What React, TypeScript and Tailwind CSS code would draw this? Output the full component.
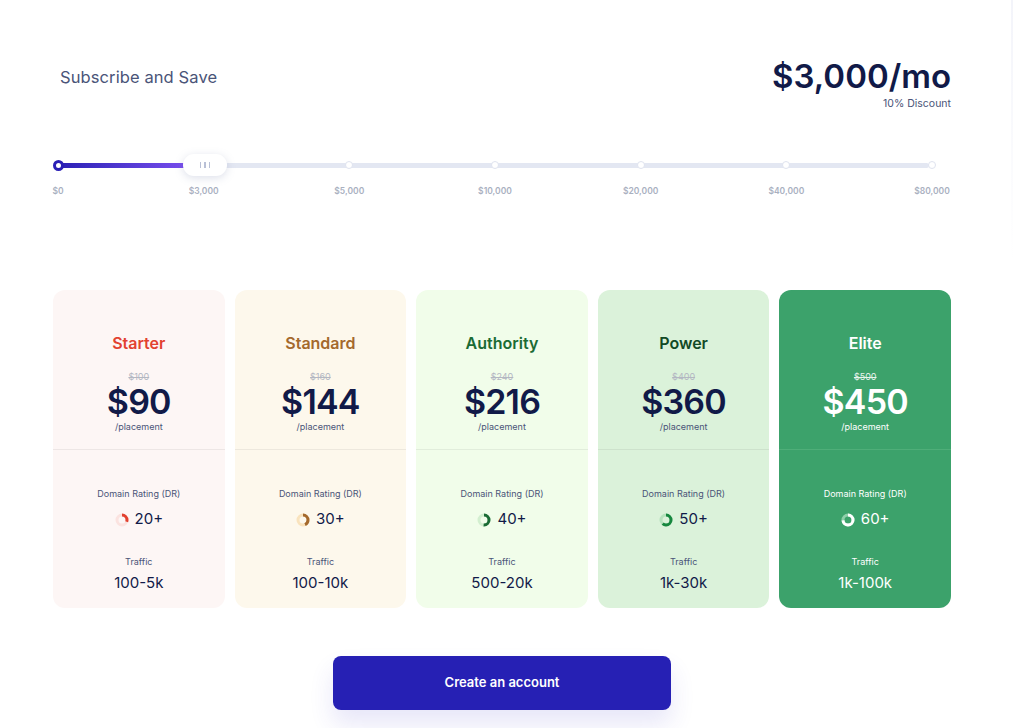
import React from 'react';

const ticks = ['$0', '$3,000', '$5,000', '$10,000', '$20,000', '$40,000', '$80,000'];

const plans = [
  { name: 'Starter', old: '$100', price: '$90', dr: '20+', traffic: '100-5k', pct: 0.3, bg: 'bg-[#fdf6f5]', title: 'text-[#e2412f]', arc: '#e2412f', track: '#fbe3e0', dark: false },
  { name: 'Standard', old: '$160', price: '$144', dr: '30+', traffic: '100-10k', pct: 0.42, bg: 'bg-[#fdf8ec]', title: 'text-[#a4692c]', arc: '#a4692c', track: '#f9e3bd', dark: false },
  { name: 'Authority', old: '$240', price: '$216', dr: '40+', traffic: '500-20k', pct: 0.5, bg: 'bg-[#f1fdea]', title: 'text-[#1a6b34]', arc: '#1a6b34', track: '#d3efd0', dark: false },
  { name: 'Power', old: '$400', price: '$360', dr: '50+', traffic: '1k-30k', pct: 0.6, bg: 'bg-[#dbf2da]', title: 'text-[#124a26]', arc: '#16873e', track: '#b6e2bd', dark: false },
  { name: 'Elite', old: '$500', price: '$450', dr: '60+', traffic: '1k-100k', pct: 0.72, bg: 'bg-[#3ca26b]', title: 'text-white', arc: '#ffffff', track: '#8fcfaa', dark: true },
];

function Donut({ pct, arc, track }: { pct: number; arc: string; track: string }) {
  const r = 5;
  const c = 2 * Math.PI * r;
  return (
    <svg width="14" height="14" viewBox="0 0 14 14" className="shrink-0">
      <circle cx="7" cy="7" r={r} fill="none" stroke={track} strokeWidth="3" />
      <circle
        cx="7"
        cy="7"
        r={r}
        fill="none"
        stroke={arc}
        strokeWidth="3"
        strokeDasharray={`${c * pct} ${c}`}
        transform="rotate(-90 7 7)"
      />
    </svg>
  );
}

export default function App() {
  return (
    <div className="min-h-[728px] bg-white relative" style={{ fontFamily: 'Inter, "Open Sans", sans-serif' }}>
      <div className="absolute right-[2px] top-0 w-[2px] h-[260px] bg-gradient-to-b from-[#f3f4fa] to-transparent" />
      <div className="w-[898px] ml-[53px] pt-[56px]">
        {/* header */}
        <div className="flex items-start justify-between">
          <h2 className="text-[16.5px] text-[#4a5478] mt-[9px] ml-[7px] tracking-[0.1px]">Subscribe and Save</h2>
          <div className="text-right">
            <div className="text-[33px] leading-[40px] font-semibold text-[#111a48]">$3,000/mo</div>
            <div className="text-[10.5px] text-[#4a5478]">10% Discount</div>
          </div>
        </div>

        {/* slider */}
        <div className="mt-[42px] px-[5px]">
          <div className="relative h-[22px]">
            <div className="absolute left-0 right-[17px] top-[9px] h-[5px] rounded-full bg-[#e3e7f2]" />
            <div className="absolute left-0 w-[136px] top-[9px] h-[5px] rounded-full bg-gradient-to-r from-[#2a1fb5] to-[#7d4ff0]" />
            <div className="absolute left-0 top-[6px] w-[11px] h-[11px] rounded-full bg-white border-[3px] border-[#2a1fb5] -translate-x-[5px]" />
            {[2, 3, 4, 5, 6].map((i) => (
              <div
                key={i}
                className="absolute top-[7px] w-[8px] h-[8px] rounded-full bg-white border border-[#dfe3ef] -translate-x-1/2"
                style={{ left: `${(i / 6) * 874}px` }}
              />
            ))}
            <div className="absolute left-[125px] top-0 w-[44px] h-[22px] rounded-full bg-white shadow-[0_2px_8px_rgba(120,130,170,0.25)] flex items-center justify-center gap-[3px]">
              <span className="w-[1.5px] h-[6px] bg-[#b9c0d6]" />
              <span className="w-[1.5px] h-[6px] bg-[#b9c0d6]" />
              <span className="w-[1.5px] h-[6px] bg-[#b9c0d6]" />
            </div>
          </div>
          <div className="relative h-[14px] mt-[9px]">
            {ticks.map((t, i) => (
              <span
                key={t}
                className="absolute top-0 text-[8.5px] font-semibold text-[#a9b0bf] -translate-x-1/2 whitespace-nowrap"
                style={{ left: `${(i / 6) * 874}px` }}
              >
                {t}
              </span>
            ))}
          </div>
        </div>

        {/* cards */}
        <div className="grid grid-cols-5 gap-[10px] mt-[91px]">
          {plans.map((p) => (
            <div key={p.name} className={`${p.bg} rounded-[12px] h-[318px] flex flex-col`}>
              <div className={`flex flex-col items-center h-[160px] border-b ${p.dark ? 'border-[#4fae79]' : 'border-[#00000010]'}`}>
                <div className={`mt-[41px] text-[16px] leading-[24px] font-semibold ${p.title}`}>{p.name}</div>
                <div className={`mt-[16px] text-[9px] leading-[11px] line-through ${p.dark ? 'text-[#e6f4ec]' : 'text-[#b3b7c2]'}`}>{p.old}</div>
                <div className={`mt-[3px] text-[34px] leading-[34px] font-semibold tracking-[-0.8px] ${p.dark ? 'text-white' : 'text-[#111a48]'}`}>{p.price}</div>
                <div className={`mt-[2px] text-[9px] leading-[12px] ${p.dark ? 'text-white' : 'text-[#4a5478]'}`}>/placement</div>
              </div>
              <div className="flex flex-col items-center">
                <div className={`mt-[37px] text-[9px] ${p.dark ? 'text-white' : 'text-[#4a5478]'}`}>Domain Rating (DR)</div>
                <div className="mt-[8px] flex items-center gap-[6px]">
                  <Donut pct={p.pct} arc={p.arc} track={p.track} />
                  <span className={`text-[15px] ${p.dark ? 'text-white' : 'text-[#111a48]'}`}>{p.dr}</span>
                </div>
                <div className={`mt-[24px] text-[9px] ${p.dark ? 'text-white' : 'text-[#4a5478]'}`}>Traffic</div>
                <div className={`mt-[4px] text-[15px] ${p.dark ? 'text-white' : 'text-[#111a48]'}`}>{p.traffic}</div>
              </div>
            </div>
          ))}
        </div>

        {/* cta */}
        <div className="flex justify-center mt-[48px]">
          <button className="w-[338px] h-[54px] rounded-[8px] bg-[#2620b4] text-white text-[13px] font-semibold shadow-[0_14px_24px_rgba(60,50,200,0.12)]">
            Create an account
          </button>
        </div>
      </div>
    </div>
  );
}
